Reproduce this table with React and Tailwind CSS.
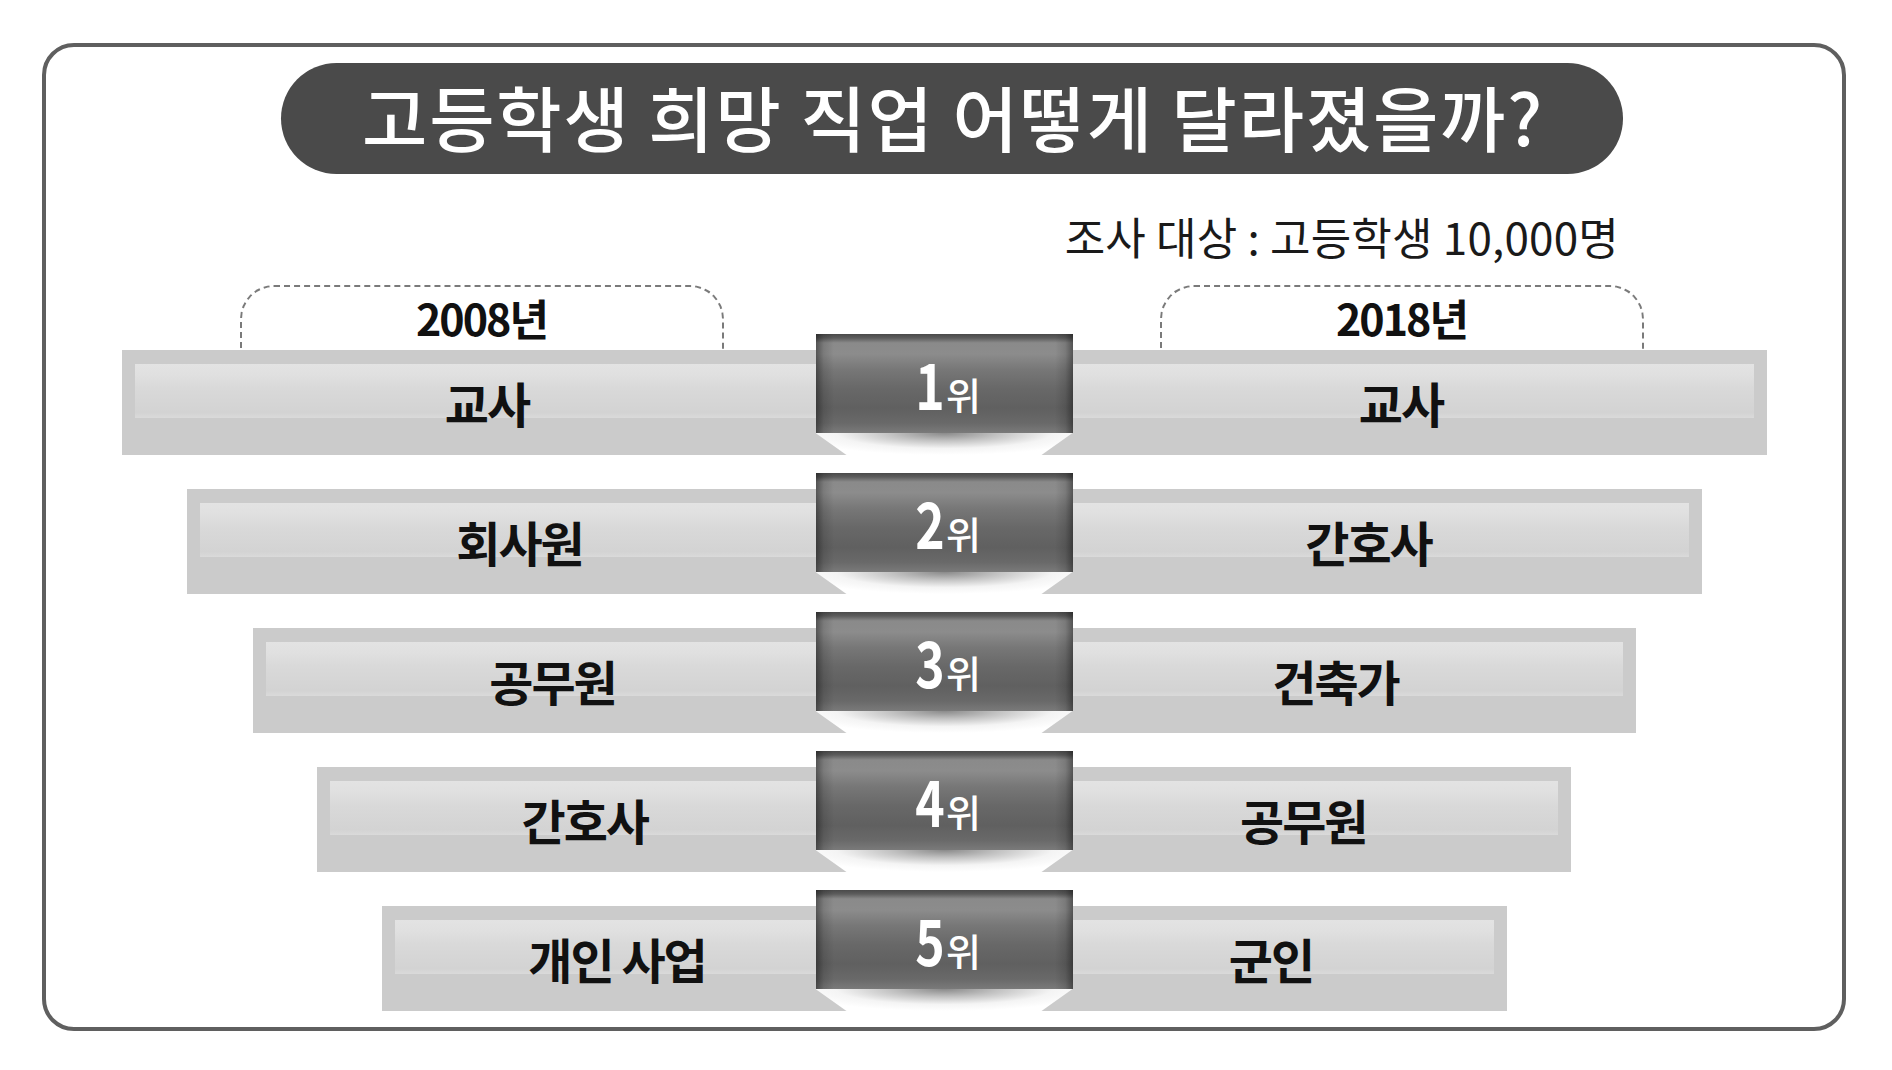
import React from "react";

const FONT = "font-['Noto_Sans_CJK_KR','Noto_Sans',sans-serif]";

// 순위별 희망 직업
const ROWS = [
  { rank: 1, left: "교사", right: "교사", width: "w-[1645px]" },
  { rank: 2, left: "회사원", right: "간호사", width: "w-[1515px]" },
  { rank: 3, left: "공무원", right: "건축가", width: "w-[1383px]" },
  { rank: 4, left: "간호사", right: "공무원", width: "w-[1254px]" },
  { rank: 5, left: "개인 사업", right: "군인", width: "w-[1125px]" },
];

const BAND =
  "bg-[#cbcbcb] bg-no-repeat bg-[image:linear-gradient(180deg,#e3e3e3_0%,#e0e0e0_20%,#d9d9d9_45%,#d3d3d3_90%,#dadada_100%)] bg-[length:calc(100%-13px)_54px]";

function YearTab({ label }) {
  return (
    <div className="w-[484px] h-[65px] border-2 border-b-0 border-dashed border-[#7a7a7a] rounded-t-[34px] flex items-center justify-center">
      <span className="text-[43px] font-bold tracking-[-2px] text-[#111] leading-none pb-[2px]">
        {label}
      </span>
    </div>
  );
}

function RankBadge({ rank }) {
  return (
    <div className="w-[257px] h-[121px] -mt-[16px] shrink-0 flex flex-col self-start">
      <div className="h-[99px] bg-[linear-gradient(180deg,#4a4a4a_0%,#5c5c5c_4%,#8a8a8a_9%,#8c8c8c_20%,#777777_36%,#686868_55%,#606060_75%,#696969_90%,#7a7a7a_100%)]">
        <div className="h-full bg-[linear-gradient(90deg,rgba(0,0,0,0.4)_0%,rgba(0,0,0,0.12)_3%,transparent_7%,transparent_93%,rgba(0,0,0,0.12)_97%,rgba(0,0,0,0.4)_100%)] flex items-center justify-center">
          <span className="text-white leading-none flex items-baseline pb-[4px]">
            <span className="inline-block text-[64px] font-bold scale-x-[0.78] origin-right">{rank}</span>
            <span className="text-[38px] font-medium ml-[1px]">위</span>
          </span>
        </div>
      </div>
      <div className="h-[22px] [clip-path:polygon(0_0,100%_0,calc(100%-31px)_100%,31px_100%)] bg-[radial-gradient(ellipse_60%_100%_at_50%_0%,#8a8a8a_0%,#c2c2c2_35%,#f4f4f4_70%,#ffffff_100%)]" />
    </div>
  );
}

function JobRow({ row }) {
  return (
    <div className={`${row.width} h-[105px] mx-auto flex bg-[#cbcbcb]`}>
      <div className={`flex-1 pl-[37px] flex items-center justify-center ${BAND} bg-[position:13px_14px]`}>
        <span className="text-[48px] font-bold tracking-[-2px] text-[#111] leading-none pb-[1px]">
          {row.left}
        </span>
      </div>
      <RankBadge rank={row.rank} />
      <div className={`flex-1 pr-[37px] flex items-center justify-center ${BAND} bg-[position:0_14px]`}>
        <span className="text-[48px] font-bold tracking-[-2px] text-[#111] leading-none pb-[1px]">
          {row.right}
        </span>
      </div>
    </div>
  );
}

export default function App() {
  return (
    <div className={`w-[1892px] h-[1070px] bg-white pt-[43px] pl-[42px] ${FONT}`}>
      <div className="w-[1804px] h-[988px] border-4 border-[#5f5f5f] rounded-[32px] pt-[16px]">
        <div className="ml-[235px] w-[1342px] h-[111px] rounded-full bg-[#4a4a4a] flex items-center justify-center">
          <span className="text-white text-[71px] font-medium leading-none tracking-[1.8px] pb-[6px] pl-[2px]">
            고등학생 희망 직업 어떻게 달라졌을까?
          </span>
        </div>

        <div className="mt-[36px] pr-[223px] flex justify-end">
          <span className="text-[44px] leading-[52px] text-[#1a1a1a] tracking-[0.2px]">
            조사 대상 : 고등학생 10,000명
          </span>
        </div>

        <div className="mt-[23px] w-[1645px] mx-auto pl-[118px] pr-[123px] flex justify-between">
          <YearTab label="2008년" />
          <YearTab label="2018년" />
        </div>

        <div className="flex flex-col gap-[34px]">
          {ROWS.map((row) => (
            <JobRow key={row.rank} row={row} />
          ))}
        </div>
      </div>
    </div>
  );
}
